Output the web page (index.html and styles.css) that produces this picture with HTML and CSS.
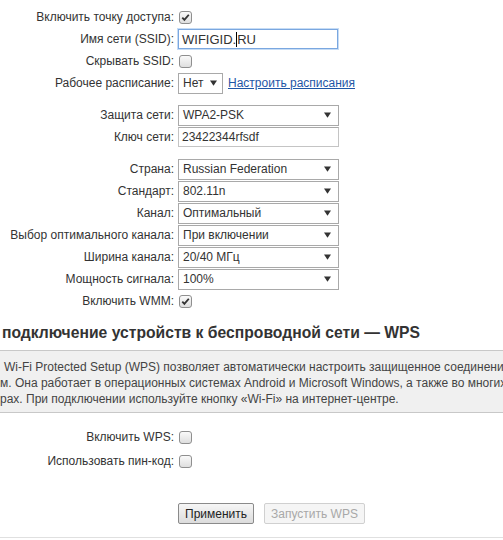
FILE: index.html
```html
<!DOCTYPE html>
<html lang="ru">
<head>
<meta charset="utf-8">
<title>Wi-Fi</title>
<link rel="stylesheet" href="styles.css">
</head>
<body>
<div class="page">
  <div class="form">
    <div class="group">
      <div class="row"><span class="lbl">Включить точку доступа:</span><span class="cb checked"><svg viewBox="0 0 12 12" width="12" height="12"><path d="M2.5 6.2 L4.8 8.6 L9.6 3" fill="none" stroke="#333" stroke-width="2"/></svg></span></div>
      <div class="row"><span class="lbl">Имя сети (SSID):</span><span class="inp focus">WIFIGID.<span class="caret"></span>RU</span></div>
      <div class="row"><span class="lbl">Скрывать SSID:</span><span class="cb"></span></div>
      <div class="row"><span class="lbl">Рабочее расписание:</span><span class="sel small">Нет<svg class="arr" viewBox="0 0 8 6" width="8" height="6"><path d="M0 0 H8 L4 6 Z" fill="#333"/></svg></span><a class="link" href="#">Настроить расписания</a></div>
    </div>
    <div class="group">
      <div class="row"><span class="lbl">Защита сети:</span><span class="sel">WPA2-PSK<svg class="arr" viewBox="0 0 8 6" width="8" height="6"><path d="M0 0 H8 L4 6 Z" fill="#333"/></svg></span></div>
      <div class="row"><span class="lbl">Ключ сети:</span><span class="inp">23422344rfsdf</span></div>
    </div>
    <div class="group">
      <div class="row"><span class="lbl">Страна:</span><span class="sel">Russian Federation<svg class="arr" viewBox="0 0 8 6" width="8" height="6"><path d="M0 0 H8 L4 6 Z" fill="#333"/></svg></span></div>
      <div class="row"><span class="lbl">Стандарт:</span><span class="sel">802.11n<svg class="arr" viewBox="0 0 8 6" width="8" height="6"><path d="M0 0 H8 L4 6 Z" fill="#333"/></svg></span></div>
      <div class="row"><span class="lbl">Канал:</span><span class="sel">Оптимальный<svg class="arr" viewBox="0 0 8 6" width="8" height="6"><path d="M0 0 H8 L4 6 Z" fill="#333"/></svg></span></div>
      <div class="row"><span class="lbl">Выбор оптимального канала:</span><span class="sel">При включении<svg class="arr" viewBox="0 0 8 6" width="8" height="6"><path d="M0 0 H8 L4 6 Z" fill="#333"/></svg></span></div>
      <div class="row"><span class="lbl">Ширина канала:</span><span class="sel">20/40 МГц<svg class="arr" viewBox="0 0 8 6" width="8" height="6"><path d="M0 0 H8 L4 6 Z" fill="#333"/></svg></span></div>
      <div class="row"><span class="lbl">Мощность сигнала:</span><span class="sel">100%<svg class="arr" viewBox="0 0 8 6" width="8" height="6"><path d="M0 0 H8 L4 6 Z" fill="#333"/></svg></span></div>
      <div class="row"><span class="lbl">Включить WMM:</span><span class="cb checked"><svg viewBox="0 0 12 12" width="12" height="12"><path d="M2.5 6.2 L4.8 8.6 L9.6 3" fill="none" stroke="#333" stroke-width="2"/></svg></span></div>
    </div>
  </div>

  <h2 class="title">подключение устройств к беспроводной сети — WPS</h2>

  <div class="desc">
    <div class="line first">Wi-Fi Protected Setup (WPS) позволяет автоматически настроить защищенное соединени</div>
    <div class="line">м. Она работает в операционных системах Android и Microsoft Windows, а также во многих</div>
    <div class="line">рах. При подключении используйте кнопку «Wi-Fi» на интернет-центре.</div>
  </div>

  <div class="form wps">
    <div class="row"><span class="lbl">Включить WPS:</span><span class="cb"></span></div>
    <div class="row"><span class="lbl">Использовать пин-код:</span><span class="cb"></span></div>
  </div>

  <div class="buttons">
    <button class="btn" type="button">Применить</button>
    <button class="btn disabled" type="button">Запустить WPS</button>
  </div>
  <div class="bottom-line"></div>
</div>
</body>
</html>
```

FILE: styles.css
```css
html, body {
  margin: 0;
  padding: 0;
  background: #fff;
  overflow: hidden;
}
body {
  font-family: "Liberation Sans", Arial, sans-serif;
  font-size: 12px;
  color: #333;
}
.page {
  width: 503px;
  height: 540px;
  overflow: hidden;
}
.form {
  padding-top: 6px;
}
.group + .group {
  margin-top: 10px;
}
.row {
  display: flex;
  align-items: center;
  height: 22px;
}
.lbl {
  width: 174px;
  padding-right: 4px;
  text-align: right;
  white-space: nowrap;
  flex: none;
}
.cb {
  box-sizing: border-box;
  width: 13px;
  height: 13px;
  margin-left: 1px;
  border: 1px solid #8f8f8f;
  border-radius: 3px;
  background: linear-gradient(#fafafa, #dedede);
  display: flex;
  align-items: center;
  justify-content: center;
}
.cb svg {
  display: block;
  width: 11px;
  height: 11px;
}
.inp {
  box-sizing: border-box;
  width: 161px;
  height: 20px;
  border: 1px solid #c4c4c4;
  border-top-color: #a8a8a8;
  padding: 0 3px;
  display: flex;
  align-items: center;
  white-space: nowrap;
  color: #333;
}
.inp.focus {
  border: 1px solid #7aa7e0;
  box-shadow: 0 0 0 1px #c6dcf5;
  width: 160px;
  font-size: 13px;
}
.caret {
  display: inline-block;
  width: 1px;
  height: 15px;
  background: #000;
}
.sel {
  box-sizing: border-box;
  width: 161px;
  height: 21px;
  border: 1px solid #a9a9a9;
  background: #fff;
  padding: 0 4px;
  display: flex;
  align-items: center;
  justify-content: space-between;
  white-space: nowrap;
  color: #333;
}
.sel .arr {
  width: 7px;
  height: 6px;
  margin-right: 3px;
}
.sel.small {
  width: 45px;
}
.sel.small .arr {
  margin-right: 1px;
}
.link {
  margin-left: 5px;
  color: #1f56a6;
  text-decoration: underline;
  white-space: nowrap;
}
.title {
  margin: 11px 0 8px 2px;
  font-size: 15.7px;
  line-height: 19px;
  font-weight: bold;
  color: #333;
  white-space: nowrap;
}
.desc {
  background: #f0f0f0;
  border-top: 1px solid #c8c8c8;
  border-bottom: 1px solid #c8c8c8;
  padding: 8px 0 5px 0;
  color: #444;
  font-size: 12px;
}
.line {
  line-height: 16px;
  white-space: nowrap;
  overflow: hidden;
}
.line.first {
  padding-left: 4px;
}
.form.wps {
  padding-top: 13px;
}
.form.wps .row + .row {
  margin-top: 2px;
}
.buttons {
  display: flex;
  gap: 10px;
  margin-top: 31px;
  padding-left: 178px;
}
.btn {
  font-family: "Liberation Sans", Arial, sans-serif;
  font-size: 12px;
  height: 21px;
  padding: 0 6px;
  border: 1px solid #8a8a8a;
  border-radius: 2px;
  background: linear-gradient(#f6f6f6, #dcdcdc);
  color: #222;
  margin: 0;
}
.btn.disabled {
  border-color: #d0d0d0;
  background: #f5f5f5;
  color: #a8a8a8;
  padding: 0 6px;
}
.bottom-line {
  margin-top: 13px;
  height: 1px;
  background: #e0e0e0;
}
```
